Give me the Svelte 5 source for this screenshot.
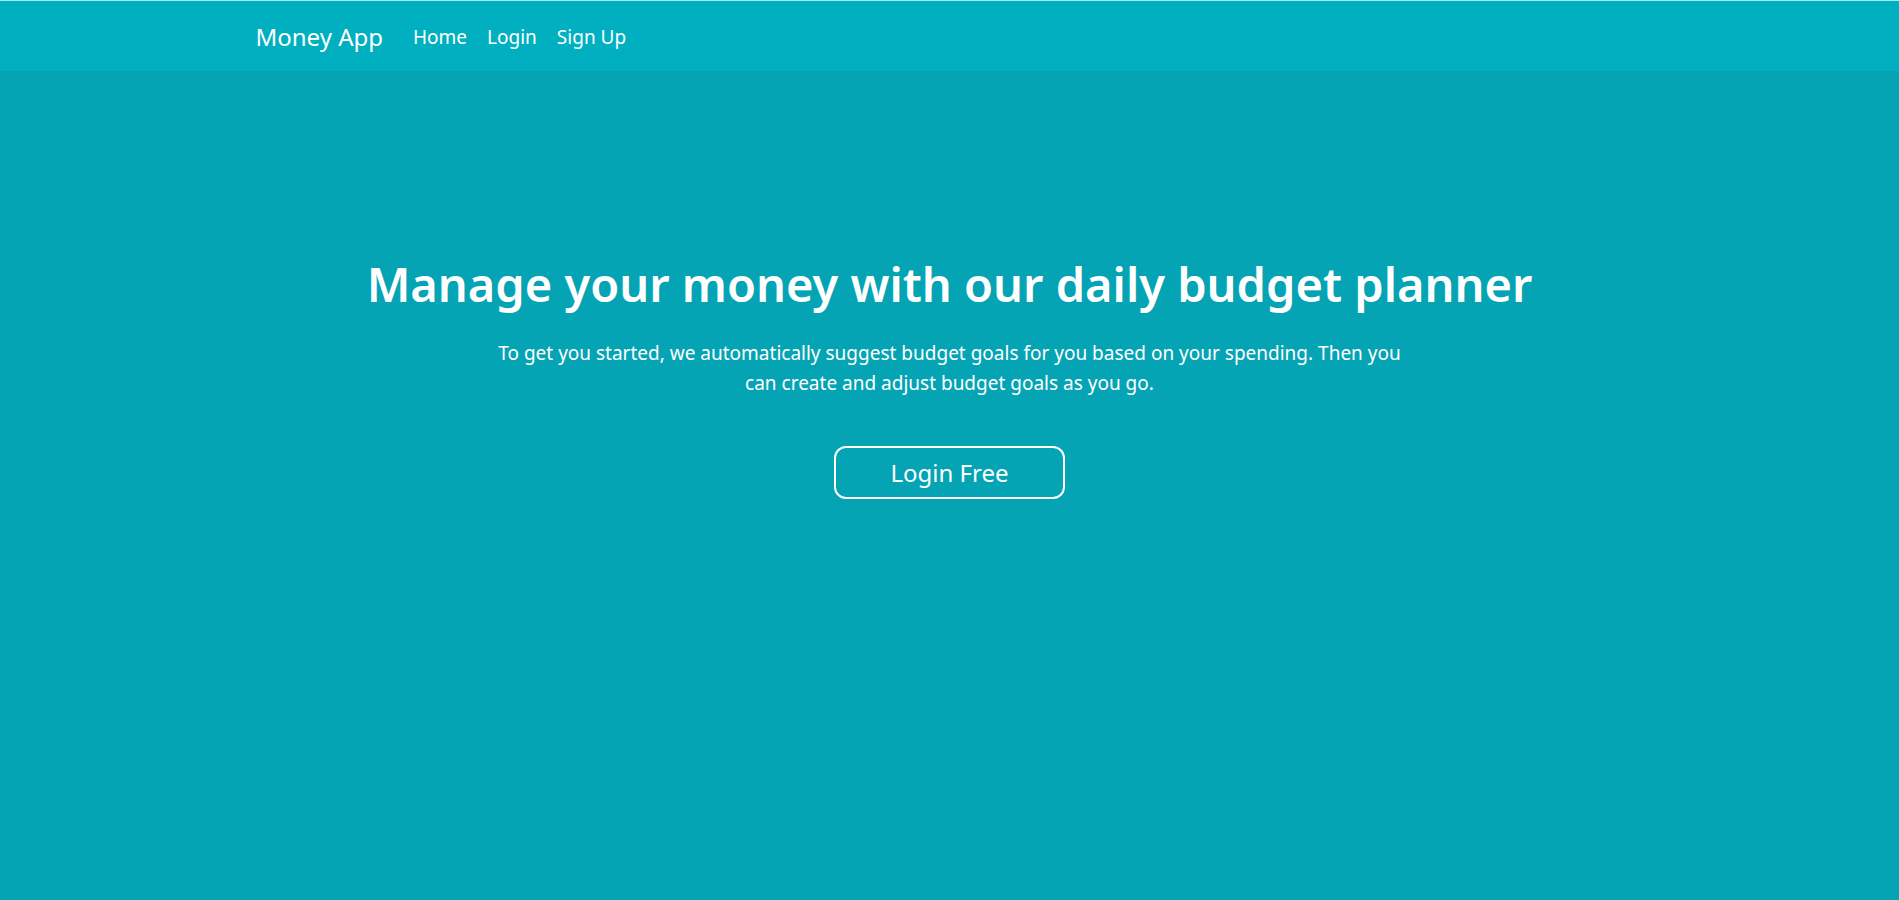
<script>
  const links = ['Home', 'Login', 'Sign Up'];
</script>

<div class="page">
  <header>
    <nav class="container" aria-label="Main">
      <a class="brand" href="#home">Money App</a>
      <ul>
        {#each links as link}
          <li><a href="#{link.toLowerCase().replace(' ', '-')}">{link}</a></li>
        {/each}
      </ul>
    </nav>
  </header>
  <main>
    <h1>Manage your money with our daily budget planner</h1>
    <p>To get you started, we automatically suggest budget goals for you based on your spending. Then you can create and adjust budget goals as you go.</p>
    <button type="button">Login Free</button>
  </main>
</div>

<style>
  :global(body) {
    margin: 0;
    background: #05a4b5;
  }

  .page {
    min-height: 100vh;
    box-sizing: border-box;
    border-top: 1px solid #a4eaf2;
    background: #05a4b5;
    color: #fff;
    font-family: "Segoe UI", "Noto Sans", "Open Sans", sans-serif;
    font-size: 19px;
    line-height: 30px;
  }

  header {
    background: #00b0c0;
    padding: 17px 0 15px;
  }

  .container {
    box-sizing: border-box;
    max-width: 1440px;
    margin: 0 auto;
    padding: 0 26px;
    display: flex;
    align-items: center;
    gap: 30px;
    min-height: 38px;
  }

  a {
    color: inherit;
    text-decoration: none;
  }

  .brand {
    font-size: 24px;
  }

  ul {
    display: flex;
    gap: 20px;
    margin: 0;
    padding: 0;
    list-style: none;
  }

  main {
    display: flex;
    flex-direction: column;
    align-items: center;
    padding: 183px 24px 48px;
    text-align: center;
  }

  h1 {
    margin: 0;
    font-size: 47px;
    line-height: 60px;
    font-weight: 600;
  }

  p {
    max-width: 920px;
    margin: 24px 0 48px;
  }

  button {
    padding: 9px 54px 8px;
    border: 2px solid #fff;
    border-radius: 12px;
    background: transparent;
    color: inherit;
    font: inherit;
    font-size: 24px;
    line-height: 32px;
  }
</style>
